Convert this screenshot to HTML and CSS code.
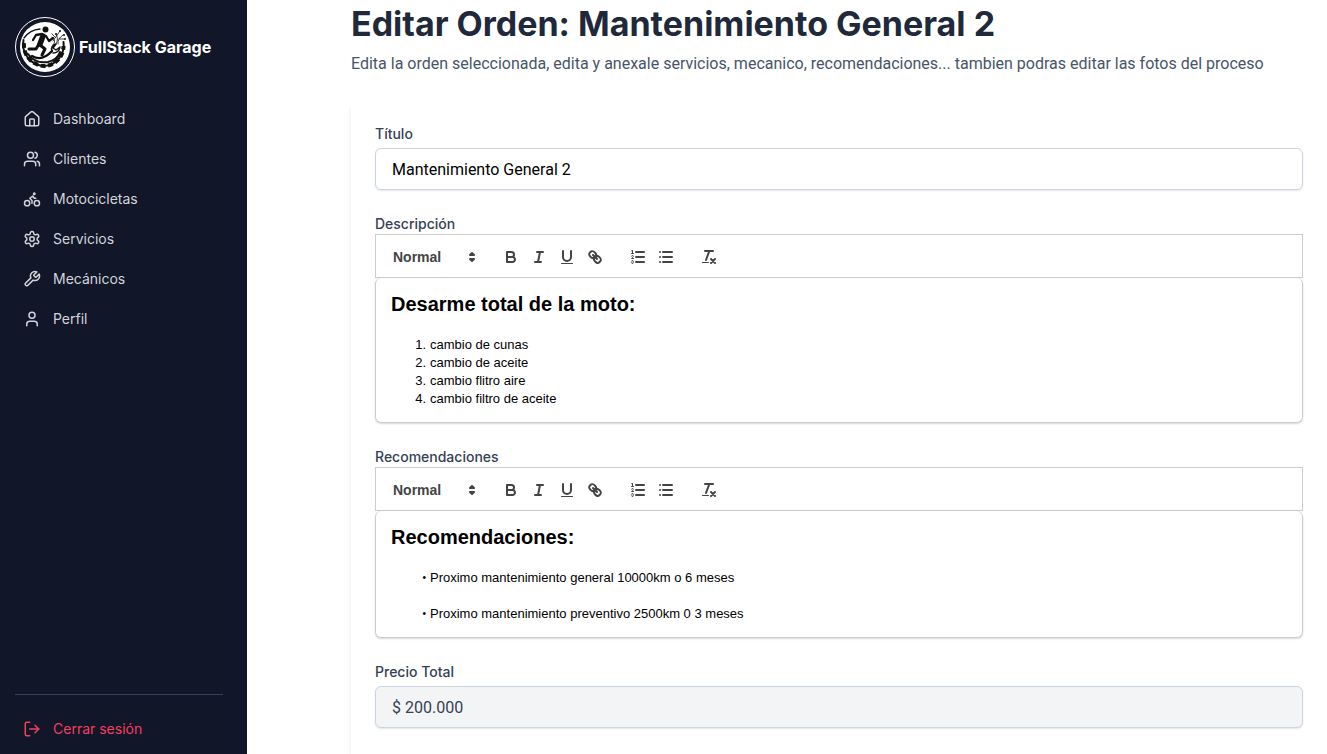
FILE: index.html
```html
<!DOCTYPE html>
<html lang="es">
<head>
<meta charset="utf-8">
<meta name="viewport" content="width=device-width, initial-scale=1">
<title>FullStack Garage - Editar Orden</title>
<link rel="stylesheet" href="styles.css">
</head>
<body>
<svg class="sprite" aria-hidden="true">
  <symbol id="i-bold" viewBox="0 0 18 18"><path d="M5,4H9.5A2.5,2.5,0,0,1,12,6.5v0A2.5,2.5,0,0,1,9.5,9H5V4Z"/><path d="M5,9h5.5A2.5,2.5,0,0,1,13,11.5v0A2.5,2.5,0,0,1,10.5,14H5V9Z"/></symbol>
  <symbol id="i-italic" viewBox="0 0 18 18"><path d="M7 4h6M5 14h6M8 14l2-10"/></symbol>
  <symbol id="i-underline" viewBox="0 0 18 18"><path d="M5,3V9a4.012,4.012,0,0,0,4,4H9a4.012,4.012,0,0,0,4-4V3"/><rect class="solid" x="3" y="15" width="12" height="1" rx=".5"/></symbol>
  <symbol id="i-link" viewBox="0 0 18 18"><path d="M7 7l4 4"/><path d="M8.9,4.577a3.476,3.476,0,0,1,.36,4.679A3.476,3.476,0,0,1,4.577,8.9C3.185,7.5,2.035,6.4,4.217,4.217S7.5,3.185,8.9,4.577Z"/><path d="M13.423,9.1a3.476,3.476,0,0,0-4.679-.36,3.476,3.476,0,0,0,.36,4.679c1.392,1.392,2.5,2.542,4.679.36S14.815,10.5,13.423,9.1Z"/></symbol>
  <symbol id="i-ordered" viewBox="0 0 18 18"><path d="M7 4h8M7 9h8M7 14h8"/><path class="thin" d="M2.5 5.5h2"/><path class="solid" d="M3.5,6A0.5,0.5,0,0,1,3,5.5V3.085l-0.276.138A0.5,0.5,0,0,1,2.053,3c-0.124-.247-0.023-0.324.224-0.447l1-.5A0.5,0.5,0,0,1,4,2.5v3A0.5,0.5,0,0,1,3.5,6Z"/><path class="thin" d="M4.5,10.5h-2c0-.234,1.85-1.076,1.85-2.234A0.959,0.959,0,0,0,2.5,8.156"/><path class="thin" d="M2.5,14.846a0.959,0.959,0,0,0,1.85-.109A0.7,0.7,0,0,0,3.75,14a0.688,0.688,0,0,0,.6-0.736,0.959,0.959,0,0,0-1.85-.109"/></symbol>
  <symbol id="i-bullet" viewBox="0 0 18 18"><path d="M6 4h9M6 9h9M6 14h9M3 4h0M3 9h0M3 14h0"/></symbol>
  <symbol id="i-clean" viewBox="0 0 18 18"><path d="M5 3h8M6 12l3.35-9M11 11l4 4M15 11l-4 4"/><rect class="solid" x="2" y="14" width="7" height="1" rx=".5"/></symbol>
  <symbol id="i-updown" viewBox="0 0 18 18"><path class="filled" d="M7 11l2 2 2-2zM7 7l2-2 2 2z"/></symbol>
</svg>
<div class="app">
  <aside class="sidebar">
    <div class="brand">
      <svg class="logo" viewBox="0 0 60 60" aria-hidden="true">
        <circle cx="30" cy="30" r="29.5" fill="none" stroke="#fff"/>
        <circle cx="30" cy="30" r="25" fill="#fff"/>
        <g fill="none" stroke="#111" stroke-linecap="round" stroke-linejoin="round">
          <path d="M9 21A22 22 0 0 1 25 12" stroke-width="1.3"/>
          <path d="M8.500 23A22 22 0 0 0 29 49A21 21 0 0 0 48.500 25" stroke-width="2"/>
          <path d="M9 26A21 21 0 0 0 29 49A20 20 0 0 0 48.500 29" stroke-width="4" stroke-linecap="butt" stroke-dasharray="5 2.600"/>
          <path d="M13 37Q20 47 33 45Q42 43 45 35Q43 42 38 44" stroke-width="2"/>
          <path d="M17 39Q27 45 37 34" stroke-width="2.400"/>
          <path d="M37 34Q35 29 41 27L38 31L41 33L45 30Q44 36 38 36" stroke-width="1.500"/>
          <path d="M28 19L25 27" stroke-width="5.500"/>
          <path d="M27 17L21 18L18 23M31 19L34 24L38 21" stroke-width="2.300"/>
          <path d="M24 27L21 32L14 32M25 28L30 32L27 38" stroke-width="3"/>
          <path d="M38 28Q42 24 37 20M41 27Q44 22 41 17M43 27Q42 22 48 18M38 24L45 14M44 22L49 22M37 17L40 20" stroke-width=".8"/>
        </g>
        <g fill="#111"><circle cx="30.500" cy="12.500" r="3"/><circle cx="45" cy="14" r="1"/><circle cx="49" cy="18" r="1"/><circle cx="50" cy="22" r="1"/><circle cx="41" cy="17" r="1"/></g>
      </svg>
      <span class="brand-name">FullStack Garage</span>
    </div>
    <nav class="nav">
      <a class="nav-link" href="#"><svg class="nav-icon" viewBox="0 0 24 24"><path d="M15 21v-8a1 1 0 0 0-1-1h-4a1 1 0 0 0-1 1v8"/><path d="M3 10a2 2 0 0 1 .709-1.528l7-5.999a2 2 0 0 1 2.582 0l7 5.999A2 2 0 0 1 21 10v9a2 2 0 0 1-2 2H5a2 2 0 0 1-2-2z"/></svg>Dashboard</a>
      <a class="nav-link" href="#"><svg class="nav-icon" viewBox="0 0 24 24"><path d="M17 21v-2a4 4 0 0 0-4-4H6a4 4 0 0 0-4 4v2"/><circle cx="10" cy="7" r="4"/><path d="M22 21v-2a4 4 0 0 0-3-3.870"/><path d="M16 3.130a4 4 0 0 1 0 7.750"/></svg>Clientes</a>
      <a class="nav-link" href="#"><svg class="nav-icon" viewBox="0 0 24 24"><circle cx="18.500" cy="17.500" r="3.500"/><circle cx="5.500" cy="17.500" r="3.500"/><circle cx="15" cy="5" r="1"/><path d="M12 17.500V14l-3-3 4-3 2 3h2"/></svg>Motocicletas</a>
      <a class="nav-link" href="#"><svg class="nav-icon" viewBox="0 0 24 24"><path d="M12.220 2h-.44a2 2 0 0 0-2 2v.18a2 2 0 0 1-1 1.730l-.43.25a2 2 0 0 1-2 0l-.15-.08a2 2 0 0 0-2.730.73l-.22.38a2 2 0 0 0 .73 2.730l.15.1a2 2 0 0 1 1 1.720v.51a2 2 0 0 1-1 1.740l-.15.09a2 2 0 0 0-.73 2.730l.22.38a2 2 0 0 0 2.730.73l.15-.08a2 2 0 0 1 2 0l.43.25a2 2 0 0 1 1 1.730V20a2 2 0 0 0 2 2h.44a2 2 0 0 0 2-2v-.18a2 2 0 0 1 1-1.730l.43-.25a2 2 0 0 1 2 0l.15.08a2 2 0 0 0 2.730-.73l.22-.39a2 2 0 0 0-.73-2.730l-.15-.08a2 2 0 0 1-1-1.740v-.5a2 2 0 0 1 1-1.740l.15-.09a2 2 0 0 0 .73-2.730l-.22-.38a2 2 0 0 0-2.730-.73l-.15.08a2 2 0 0 1-2 0l-.43-.25a2 2 0 0 1-1-1.730V4a2 2 0 0 0-2-2z"/><circle cx="12" cy="12" r="3"/></svg>Servicios</a>
      <a class="nav-link" href="#"><svg class="nav-icon" viewBox="0 0 24 24"><path d="M14.700 6.300a1 1 0 0 0 0 1.400l1.600 1.600a1 1 0 0 0 1.400 0l3.770-3.770a6 6 0 0 1-7.940 7.940l-6.910 6.910a2.120 2.120 0 0 1-3-3l6.910-6.910a6 6 0 0 1 7.940-7.940l-3.760 3.760z"/></svg>Mecánicos</a>
      <a class="nav-link" href="#"><svg class="nav-icon" viewBox="0 0 24 24"><path d="M19 21v-2a4 4 0 0 0-4-4H9a4 4 0 0 0-4 4v2"/><circle cx="12" cy="7" r="4"/></svg>Perfil</a>
    </nav>
    <div class="sidebar-foot">
      <button class="nav-link logout" type="button"><svg class="nav-icon" viewBox="0 0 24 24"><path d="M9 21H5a2 2 0 0 1-2-2V5a2 2 0 0 1 2-2h4"/><path d="M16 17l5-5-5-5"/><path d="M21 12H9"/></svg>Cerrar sesión</button>
    </div>
  </aside>
  <main class="main">
    <h1 class="title">Editar Orden: Mantenimiento General 2</h1>
    <p class="subtitle">Edita la orden seleccionada, edita y anexale servicios, mecanico, recomendaciones... tambien podras editar las fotos del proceso</p>
    <form class="card">
      <div class="field">
        <label class="label" for="titulo">Título</label>
        <input class="input" id="titulo" type="text" value="Mantenimiento General 2">
      </div>
      <div class="field field-rich">
        <span class="label" id="desc-label">Descripción</span>
        <div class="toolbar">
          <div class="picker">
            <select class="picker-select" aria-label="Formato de descripción"><option>Normal</option></select>
            <svg class="picker-icon"><use href="#i-updown"/></svg>
          </div>
          <div class="tools">
            <button class="tool" type="button" aria-label="Negrita"><svg><use href="#i-bold"/></svg></button>
            <button class="tool" type="button" aria-label="Cursiva"><svg><use href="#i-italic"/></svg></button>
            <button class="tool" type="button" aria-label="Subrayado"><svg><use href="#i-underline"/></svg></button>
            <button class="tool" type="button" aria-label="Enlace"><svg><use href="#i-link"/></svg></button>
          </div>
          <div class="tools">
            <button class="tool" type="button" aria-label="Lista numerada"><svg><use href="#i-ordered"/></svg></button>
            <button class="tool" type="button" aria-label="Lista"><svg><use href="#i-bullet"/></svg></button>
          </div>
          <div class="tools">
            <button class="tool" type="button" aria-label="Quitar formato"><svg><use href="#i-clean"/></svg></button>
          </div>
        </div>
        <div class="editor" role="textbox" aria-multiline="true" aria-labelledby="desc-label" contenteditable="true" spellcheck="false">
          <h2>Desarme total de la moto:</h2>
          <p><br></p>
          <ol><li>cambio de cunas</li><li>cambio de aceite</li><li>cambio flitro aire</li><li>cambio filtro de aceite</li></ol>
        </div>
      </div>
      <div class="field field-rich">
        <span class="label" id="rec-label">Recomendaciones</span>
        <div class="toolbar">
          <div class="picker">
            <select class="picker-select" aria-label="Formato de recomendaciones"><option>Normal</option></select>
            <svg class="picker-icon"><use href="#i-updown"/></svg>
          </div>
          <div class="tools">
            <button class="tool" type="button" aria-label="Negrita"><svg><use href="#i-bold"/></svg></button>
            <button class="tool" type="button" aria-label="Cursiva"><svg><use href="#i-italic"/></svg></button>
            <button class="tool" type="button" aria-label="Subrayado"><svg><use href="#i-underline"/></svg></button>
            <button class="tool" type="button" aria-label="Enlace"><svg><use href="#i-link"/></svg></button>
          </div>
          <div class="tools">
            <button class="tool" type="button" aria-label="Lista numerada"><svg><use href="#i-ordered"/></svg></button>
            <button class="tool" type="button" aria-label="Lista"><svg><use href="#i-bullet"/></svg></button>
          </div>
          <div class="tools">
            <button class="tool" type="button" aria-label="Quitar formato"><svg><use href="#i-clean"/></svg></button>
          </div>
        </div>
        <div class="editor" role="textbox" aria-multiline="true" aria-labelledby="rec-label" contenteditable="true" spellcheck="false">
          <h2>Recomendaciones:</h2>
          <p><br></p>
          <ul><li>Proximo mantenimiento general 10000km o 6 meses</li></ul>
          <p><br></p>
          <ul><li>Proximo mantenimiento preventivo 2500km 0 3 meses</li></ul>
        </div>
      </div>
      <div class="field">
        <label class="label" for="precio">Precio Total</label>
        <input class="input input-readonly" id="precio" type="text" value="$ 200.000" readonly>
      </div>
    </form>
  </main>
</div>
</body>
</html>
```
FILE: styles.css
```css
*, *::before, *::after { box-sizing: border-box; }
body { margin: 0; background: #fff; color: #000; font-family: Inter, "Liberation Sans", sans-serif; font-size: 16px; line-height: 24px; }
h1, h2, p, ol, ul { margin: 0; padding: 0; }
button, input, select { font: inherit; color: inherit; margin: 0; }
.sprite { display: none; }
.app { display: flex; min-height: 100vh; }

.sidebar { flex: 0 0 247px; display: flex; flex-direction: column; padding: 17px 24px 5px 15px; background: #111628; }
.brand { display: flex; align-items: center; gap: 4px; }
.logo { width: 60px; height: 60px; }
.brand-name { color: #fff; font-size: 16px; font-weight: 700; white-space: nowrap; }
.nav { display: flex; flex-direction: column; padding-top: 22px; }
.nav-link { display: flex; align-items: center; gap: 12px; height: 40px; padding: 0 8px; color: #d1d5db; font-size: 14px; line-height: 20px; text-decoration: none; }
.nav-icon { width: 18px; height: 18px; fill: none; stroke: currentColor; stroke-width: 2; stroke-linecap: round; stroke-linejoin: round; }
.sidebar-foot { margin-top: auto; padding-top: 14px; border-top: 1px solid #334155; }
.logout { width: 100%; border: 0; background: none; color: #f43f5e; cursor: pointer; }

.main { flex: 1; min-width: 0; display: flex; flex-direction: column; padding: 4px 0 0 104px; }
.title { color: #1e293b; font-size: 34px; line-height: 40px; font-weight: 700; }
.subtitle { margin: 8px 0 24px; color: #475569; font-family: Roboto, Inter, sans-serif; }
.card { flex: 1; display: flex; flex-direction: column; gap: 24px; padding: 24px; background: #fff; border-radius: 8px 8px 0 0; box-shadow: 0 4px 6px -1px rgb(0 0 0 / 10%), 0 2px 4px -2px rgb(0 0 0 / 10%); }
.field { display: flex; flex-direction: column; gap: 4px; }
.field-rich { gap: 0; }
.label { color: #334155; font-size: 14px; line-height: 20px; font-weight: 500; }
.input { width: 100%; height: 42px; padding: 8px 16px; border: 1px solid #cbd5e1; border-radius: 6px; background: #fff; box-shadow: 0 1px 2px rgb(0 0 0 / 10%); font-family: Roboto, Inter, sans-serif; }
.input-readonly { background: #f3f4f6; color: #334155; }

.toolbar { display: flex; gap: 15px; padding: 10px 8px 8px; border: 1px solid #ccc; color: #444; font-family: "Liberation Sans", Arial, sans-serif; }
.picker { position: relative; width: 98px; height: 24px; }
.picker-select { display: block; width: 100%; height: 24px; padding: 0 20px 0 8px; border: 1px solid transparent; background: none; appearance: none; font-size: 14px; line-height: 20px; font-weight: 600; }
.picker-icon { position: absolute; top: 3px; right: 1px; pointer-events: none; }
.tools { display: flex; }
.tool { width: 28px; height: 24px; padding: 3px 5px; border: 0; background: none; cursor: pointer; }
.tool svg, .picker-icon { display: block; width: 18px; height: 18px; fill: none; stroke: #444; stroke-width: 2; stroke-linecap: round; stroke-linejoin: round; }
.solid { fill: #444; stroke: none; }
.filled { fill: #444; }
.thin { stroke-width: 1; }

.editor { padding: 12px 15px 14px; border: 1px solid #ccc; border-top: 0; border-radius: 6px; box-shadow: 0 1px 2px rgb(0 0 0 / 15%); font-family: "Liberation Sans", Arial, sans-serif; font-size: 13px; line-height: 18px; outline: none; }
.editor h2 { font-size: 20px; line-height: 28px; font-weight: 700; }
.editor ol, .editor ul { list-style: none; padding-left: 20px; counter-reset: item; }
.editor li { display: flex; gap: 4px; counter-increment: item; }
.editor li::before { width: 15px; text-align: right; white-space: nowrap; }
.editor ol li::before { content: counter(item) "."; }
.editor ul li::before { content: "•"; font-size: 10px; }
```
